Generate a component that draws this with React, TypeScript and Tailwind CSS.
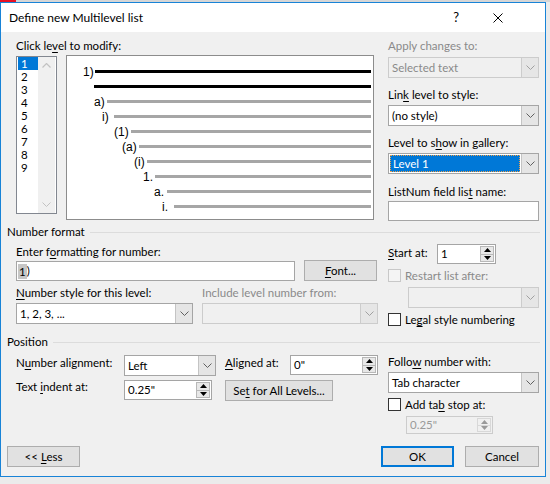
import React from "react";

const U = ({ children }: { children: React.ReactNode }) => (
  <span className="underline decoration-1 underline-offset-[2px]">{children}</span>
);

const Chevron = ({ c = "#606060" }: { c?: string }) => (
  <svg width="9" height="5" viewBox="0 0 9 5">
    <path d="M0.5 0.5 L4.5 4.5 L8.5 0.5" fill="none" stroke={c} strokeWidth="1" />
  </svg>
);

const TriUp = ({ c = "#000000" }: { c?: string }) => (
  <svg width="7" height="4" viewBox="0 0 7 4">
    <path d="M0 4 L3.5 0 L7 4Z" fill={c} />
  </svg>
);

const TriDown = ({ c = "#000000" }: { c?: string }) => (
  <svg width="7" height="4" viewBox="0 0 7 4">
    <path d="M0 0 L3.5 4 L7 0Z" fill={c} />
  </svg>
);

function Combo({
  cls,
  text,
  disabled = false,
  focused = false,
}: {
  cls: string;
  text?: string;
  disabled?: boolean;
  focused?: boolean;
}) {
  return (
    <div
      className={`${cls} h-[21px] flex border ${
        disabled ? "border-[#cccccc] bg-[#f0f0f0]" : "border-[#a5a5a5] bg-white"
      }`}
    >
      <div className="flex-1 flex items-center px-[1px] min-w-0">
        {focused ? (
          <div className="flex-1 h-[17px] bg-[#0078d7] text-white border border-dotted border-[#f0a04a] flex items-center pl-[2px]">
            {text}
          </div>
        ) : (
          <span className={`pl-[2px] ${disabled ? "text-[#8a8a8a]" : ""}`}>{text}</span>
        )}
      </div>
      <div
        className={`w-[17px] flex items-center justify-center border-l ${
          disabled ? "border-[#cccccc] bg-[#e6e6e6]" : "border-[#c4c4c4] bg-[#e5e5e5]"
        }`}
      >
        <Chevron c={disabled ? "#a0a0a0" : "#606060"} />
      </div>
    </div>
  );
}

function Spin({
  cls,
  text,
  disabled = false,
  h = "h-[20px]",
}: {
  cls: string;
  text: string;
  disabled?: boolean;
  h?: string;
}) {
  const tc = disabled ? "#9a9a9a" : "#000000";
  return (
    <div
      className={`${cls} ${h} flex border ${
        disabled ? "border-[#cccccc] bg-[#f0f0f0]" : "border-[#a5a5a5] bg-white"
      }`}
    >
      <div className={`flex-1 flex items-center pl-[3px] ${disabled ? "text-[#9a9a9a]" : ""}`}>
        {text}
      </div>
      <div className="w-[16px] flex flex-col p-[1px]">
        <div
          className={`flex-1 flex items-center justify-center border ${
            disabled ? "border-[#d8d8d8] bg-[#f0f0f0]" : "border-[#b8b8b8] bg-[#e8e8e8]"
          }`}
        >
          <TriUp c={tc} />
        </div>
        <div
          className={`flex-1 flex items-center justify-center border border-t-0 ${
            disabled ? "border-[#d8d8d8] bg-[#f0f0f0]" : "border-[#b8b8b8] bg-[#e8e8e8]"
          }`}
        >
          <TriDown c={tc} />
        </div>
      </div>
    </div>
  );
}

function Btn({
  cls,
  children,
  def = false,
}: {
  cls: string;
  children: React.ReactNode;
  def?: boolean;
}) {
  return (
    <div
      className={`${cls} h-[21px] flex items-center justify-center bg-[#e1e1e1] ${
        def ? "border-2 border-[#0078d7]" : "border border-[#adadad]"
      }`}
    >
      {children}
    </div>
  );
}

const Check = ({ disabled = false }: { disabled?: boolean }) => (
  <div
    className={`w-[13px] h-[13px] border ${
      disabled ? "border-[#c8c8c8] bg-[#f4f4f4]" : "border-[#333333] bg-white"
    }`}
  />
);

function GroupHeader({ title }: { title: string }) {
  return (
    <div className="flex items-center h-[16px] pl-[6px] pr-[5px]">
      <span className="leading-[16px]">{title}</span>
      <div className="flex-1 h-px bg-[#dcdcdc] ml-[5px]" />
    </div>
  );
}

export default function App() {
  return (
    <div className="w-[550px] h-[484px] bg-[#ebebeb] overflow-hidden font-['Lato',sans-serif] text-[11.5px] text-black">
      <div className="flex h-[2px]">
        <div className="w-[16px] bg-[#e81123]" />
        <div className="flex-1 bg-[#d6d6d6]" />
      </div>
      <div className="w-[546px] h-[475px] border border-[#1883d7] flex flex-col bg-[#f0f0f0]">
        {/* Title bar */}
        <div className="h-[29px] bg-white flex items-center pl-[8px] shrink-0">
          <span className="text-[12px]">Define new Multilevel list</span>
          <span className="ml-auto text-[13px] leading-none">?</span>
          <svg className="ml-[34px] mr-[42px]" width="10" height="10" viewBox="0 0 10 10">
            <path d="M0.5 0.5 L9.5 9.5 M9.5 0.5 L0.5 9.5" stroke="#000" strokeWidth="1" />
          </svg>
        </div>

        {/* Top section */}
        <div className="flex pl-[15px] mt-[6px]">
          <div className="w-[358px] flex flex-col">
            <div className="h-[16px] leading-[16px]">
              Click le<U>v</U>el to modify:
            </div>
            <div className="flex items-start mt-[1px]">
              {/* Level listbox */}
              <div className="mt-[1px] w-[41px] h-[158px] border border-[#828790] bg-white flex">
                <div className="w-[21px] pl-[1px] flex flex-col">
                  {["1", "2", "3", "4", "5", "6", "7", "8", "9"].map((n, i) => (
                    <div
                      key={n}
                      className={`w-[20px] h-[13px] leading-[13px] pl-[3px] ${
                        i === 0 ? "bg-[#0078d7] text-white" : ""
                      }`}
                    >
                      {n}
                    </div>
                  ))}
                </div>
                <div className="w-[17px] bg-[#f0f0f0] flex flex-col justify-between">
                  <div className="h-[17px] flex items-center justify-center">
                    <svg width="9" height="5" viewBox="0 0 9 5">
                      <path d="M0.5 4.5 L4.5 0.5 L8.5 4.5" fill="none" stroke="#c2c2c2" strokeWidth="1.2" />
                    </svg>
                  </div>
                  <div className="h-[17px] flex items-center justify-center">
                    <Chevron c="#c2c2c2" />
                  </div>
                </div>
              </div>
              {/* Preview */}
              <div className="ml-[9px] w-[308px] h-[165px] border border-[#8c8c8c] bg-white pt-[8px] pr-[2px] flex flex-col font-['Liberation_Sans',Arial,sans-serif] text-[12px]">
                <div className="h-[15px] flex items-center">
                  <div className="w-[28px] pl-[16px] leading-none">1)</div>
                  <div className="flex-1 h-[3px] bg-black" />
                </div>
                <div className="h-[15px] flex items-center">
                  <div className="w-[27px]" />
                  <div className="flex-1 h-[3px] bg-black" />
                </div>
                <div className="h-[15px] flex items-center">
                  <div className="w-[40px] pl-[27px] leading-none">a)</div>
                  <div className="flex-1 h-[3px] bg-[#a6a6a6]" />
                </div>
                <div className="h-[15px] flex items-center">
                  <div className="w-[47px] pl-[35px] leading-none">i)</div>
                  <div className="flex-1 h-[3px] bg-[#a6a6a6]" />
                </div>
                <div className="h-[15px] flex items-center">
                  <div className="w-[64px] pl-[47px] leading-none">(1)</div>
                  <div className="flex-1 h-[3px] bg-[#a6a6a6]" />
                </div>
                <div className="h-[15px] flex items-center">
                  <div className="w-[72px] pl-[55px] leading-none">(a)</div>
                  <div className="flex-1 h-[3px] bg-[#a6a6a6]" />
                </div>
                <div className="h-[15px] flex items-center">
                  <div className="w-[80px] pl-[67px] leading-none">(i)</div>
                  <div className="flex-1 h-[3px] bg-[#a6a6a6]" />
                </div>
                <div className="h-[15px] flex items-center">
                  <div className="w-[88px] pl-[76px] leading-none">1.</div>
                  <div className="flex-1 h-[3px] bg-[#a6a6a6]" />
                </div>
                <div className="h-[15px] flex items-center">
                  <div className="w-[100px] pl-[87px] leading-none">a.</div>
                  <div className="flex-1 h-[3px] bg-[#a6a6a6]" />
                </div>
                <div className="h-[15px] flex items-center">
                  <div className="w-[107px] pl-[95px] leading-none">i.</div>
                  <div className="flex-1 h-[3px] bg-[#a6a6a6]" />
                </div>
              </div>
            </div>
          </div>

          <div className="ml-[14px] w-[151px] flex flex-col">
            <div className="h-[16px] leading-[16px] text-[#8a8a8a]">Apply changes to:</div>
            <Combo cls="mt-[3px] w-[151px]" text="Selected text" disabled />
            <div className="mt-[9px] h-[16px] leading-[16px]">
              Lin<U>k</U> level to style:
            </div>
            <Combo cls="mt-[2px] w-[151px]" text="(no style)" />
            <div className="mt-[9px] h-[16px] leading-[16px]">
              Level to s<U>h</U>ow in gallery:
            </div>
            <Combo cls="mt-[2px] w-[151px]" text="Level 1" focused />
            <div className="mt-[10px] h-[16px] leading-[16px]">
              ListNum field lis<U>t</U> name:
            </div>
            <div className="mt-[1px] w-[151px] h-[20px] border border-[#a5a5a5] bg-white" />
          </div>
        </div>

        {/* Number format */}
        <div className="mt-[3px]">
          <GroupHeader title="Number format" />
        </div>
        <div className="flex pl-[15px]">
          <div className="w-[362px] flex flex-col">
            <div className="mt-[4px] h-[16px] leading-[16px]">
              Enter f<U>o</U>rmatting for number:
            </div>
            <div className="flex items-start">
              <div className="mt-[1px] w-[279px] h-[20px] border border-[#a5a5a5] bg-white flex items-center pl-[1px]">
                <span className="bg-[#c6c6c6] px-[1px] leading-[15px]">1</span>
                <span>)</span>
              </div>
              <Btn cls="ml-[9px] w-[73px]">
                <span>
                  <U>F</U>ont...
                </span>
              </Btn>
            </div>
            <div className="mt-[4px] flex h-[16px] leading-[16px]">
              <div className="w-[186px]">
                <U>N</U>umber style for this level:
              </div>
              <div className="text-[#8a8a8a]">Include level number from:</div>
            </div>
            <div className="mt-[2px] flex">
              <Combo cls="w-[177px]" text="1, 2, 3, ..." />
              <Combo cls="ml-[9px] w-[176px]" disabled />
            </div>
          </div>

          <div className="ml-[10px] w-[151px] flex flex-col">
            <div className="mt-[4px] flex items-center h-[20px]">
              <div className="w-[49px] leading-[16px] -mt-[2px]">
                <U>S</U>tart at:
              </div>
              <Spin cls="w-[59px]" text="1" />
            </div>
            <div className="mt-[5px] flex items-center h-[13px]">
              <Check disabled />
              <span className="ml-[4px] text-[#8a8a8a]">Restart list after:</span>
            </div>
            <Combo cls="mt-[5px] ml-[20px] w-[131px]" disabled />
            <div className="mt-[5px] flex items-center h-[13px]">
              <Check />
              <span className="ml-[4px]">
                Le<U>g</U>al style numbering
              </span>
            </div>
          </div>
        </div>

        {/* Position */}
        <div className="mt-[8px]">
          <GroupHeader title="Position" />
        </div>
        <div className="flex pl-[15px]">
          <div className="w-[362px] flex flex-col">
            <div className="mt-[5px] flex items-start h-[21px]">
              <div className="w-[108px] leading-[16px]">
                N<U>u</U>mber alignment:
              </div>
              <Combo cls="w-[92px]" text="Left" />
              <div className="ml-[9px] w-[65px] leading-[16px]">
                <U>A</U>ligned at:
              </div>
              <Spin cls="w-[88px]" text={'0"'} />
            </div>
            <div className="mt-[4px] flex items-start">
              <div className="w-[108px] leading-[14px]">
                Text <U>i</U>ndent at:
              </div>
              <Spin cls="w-[88px]" text={'0.25"'} />
              <Btn cls="ml-[13px] w-[108px]">
                <span>
                  Se<U>t</U> for All Levels...
                </span>
              </Btn>
            </div>
          </div>

          <div className="ml-[10px] w-[151px] flex flex-col">
            <div className="mt-[4px] h-[16px] leading-[16px]">
              Follo<U>w</U> number with:
            </div>
            <Combo cls="mt-[2px] w-[151px]" text="Tab character" />
            <div className="mt-[5px] flex items-center h-[13px]">
              <Check />
              <span className="ml-[4px]">
                Add ta<U>b</U> stop at:
              </span>
            </div>
            <Spin cls="mt-[5px] ml-[18px] w-[87px]" h="h-[18px]" text={'0.25"'} disabled />
          </div>
        </div>

        {/* Buttons */}
        <div className="mt-[12px] flex pl-[6px]">
          <Btn cls="w-[73px]">
            <span>
              {"<< "}
              <U>L</U>ess
            </span>
          </Btn>
          <Btn cls="ml-[301px] w-[73px]" def>
            OK
          </Btn>
          <Btn cls="ml-[11px] w-[74px]">Cancel</Btn>
        </div>
      </div>
    </div>
  );
}
